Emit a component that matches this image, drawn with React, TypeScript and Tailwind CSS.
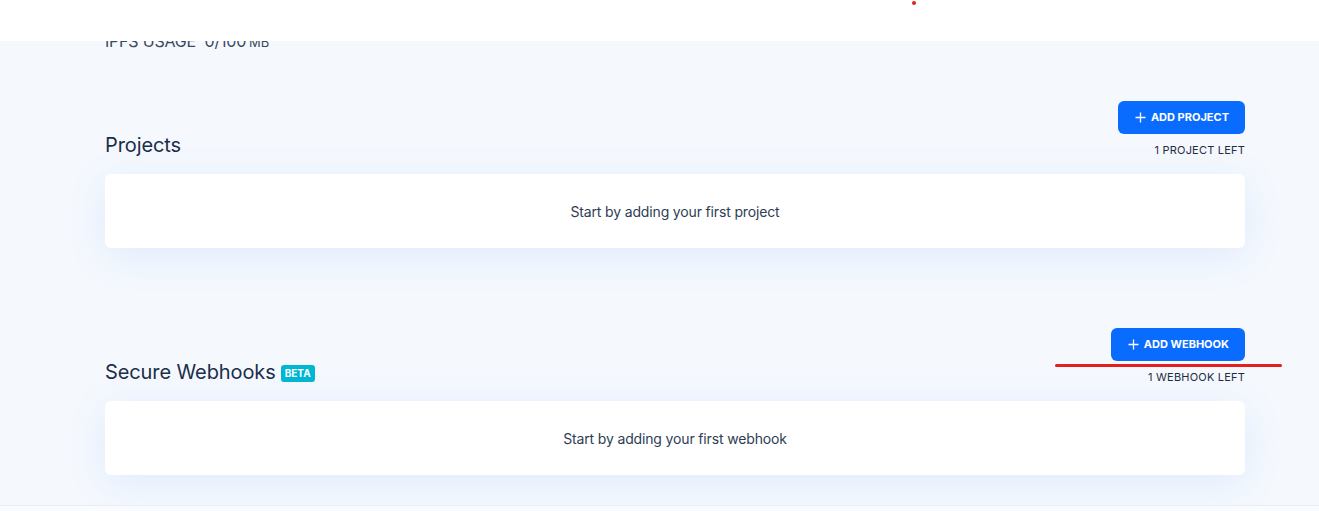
import React from "react";

function PlusIcon() {
  return (
    <svg width="11" height="11" viewBox="0 0 11 11" className="shrink-0">
      <path d="M5.5 0.5v10M0.5 5.5h10" stroke="white" strokeWidth="1.3" fill="none" />
    </svg>
  );
}

function Section({
  title,
  badge,
  button,
  left,
  empty,
  annotate,
}: {
  title: string;
  badge?: boolean;
  button: string;
  left: string;
  empty: string;
  annotate?: boolean;
}) {
  return (
    <section>
      <div className="flex items-end justify-between">
        <div className="flex items-center gap-[5px]">
          <h2 className="text-[20px] leading-[25px] tracking-[-0.1px] text-[#1b2e4a]">{title}</h2>
          {badge && (
            <span className="mt-[2px] rounded-[3px] bg-[#00b6d3] px-[4px] text-[10px] font-bold leading-[17px] text-white">
              BETA
            </span>
          )}
        </div>
        <div className="relative flex flex-col items-end">
          <button className="flex h-[33px] items-center gap-[5px] rounded-[6px] bg-[#0a6cff] pl-[17px] pr-[16px] text-[11px] font-bold tracking-[0px] text-white">
            <PlusIcon />
            <span>{button}</span>
          </button>
          {annotate && (
            <div className="absolute right-[-37px] top-[36px] h-[3px] w-[227px] rounded-full bg-[#e3201f]" />
          )}
          <div className="mt-[8px] text-[11px] leading-[16px] tracking-[0.2px] text-[#1f2d44]">{left}</div>
        </div>
      </div>
      <div className="mt-[16px] flex h-[74px] items-center justify-center rounded-[6px] bg-white text-[14px] tracking-[-0.15px] text-[#2e3d55] shadow-[0_8px_40px_rgba(40,110,240,0.10)]">
        {empty}
      </div>
    </section>
  );
}

export default function App() {
  return (
    <div
      className="relative h-[511px] w-[1319px] overflow-hidden bg-[#f5f9fe]"
      style={{ fontFamily: "Inter, 'Noto Sans', sans-serif" }}
    >
      <header className="absolute left-0 top-0 z-10 h-[41px] w-full bg-white">
        <div className="absolute left-[912px] top-[1px] h-[4px] w-[4px] rounded-full bg-[#e3201f]" />
      </header>
      <main className="ml-[105px] w-[1140px] pt-[31px]">
        <div className="text-[16px] leading-[20px] tracking-[-0.2px] text-[#3b4a60]">
          IPFS USAGE&nbsp;&nbsp;0/100<span className="ml-[3px] text-[13px]">MB</span>
        </div>
        <div className="mt-[49px] flex flex-col gap-[80px]">
          <Section
            title="Projects"
            button="ADD PROJECT"
            left="1 PROJECT LEFT"
            empty="Start by adding your first project"
          />
          <Section
            title="Secure Webhooks"
            badge
            button="ADD WEBHOOK"
            left="1 WEBHOOK LEFT"
            empty="Start by adding your first webhook"
            annotate
          />
        </div>
      </main>
      <footer className="absolute bottom-0 left-0 h-[6px] w-full border-t border-[#e6eef8] bg-[#f9fbfe]" />
    </div>
  );
}
